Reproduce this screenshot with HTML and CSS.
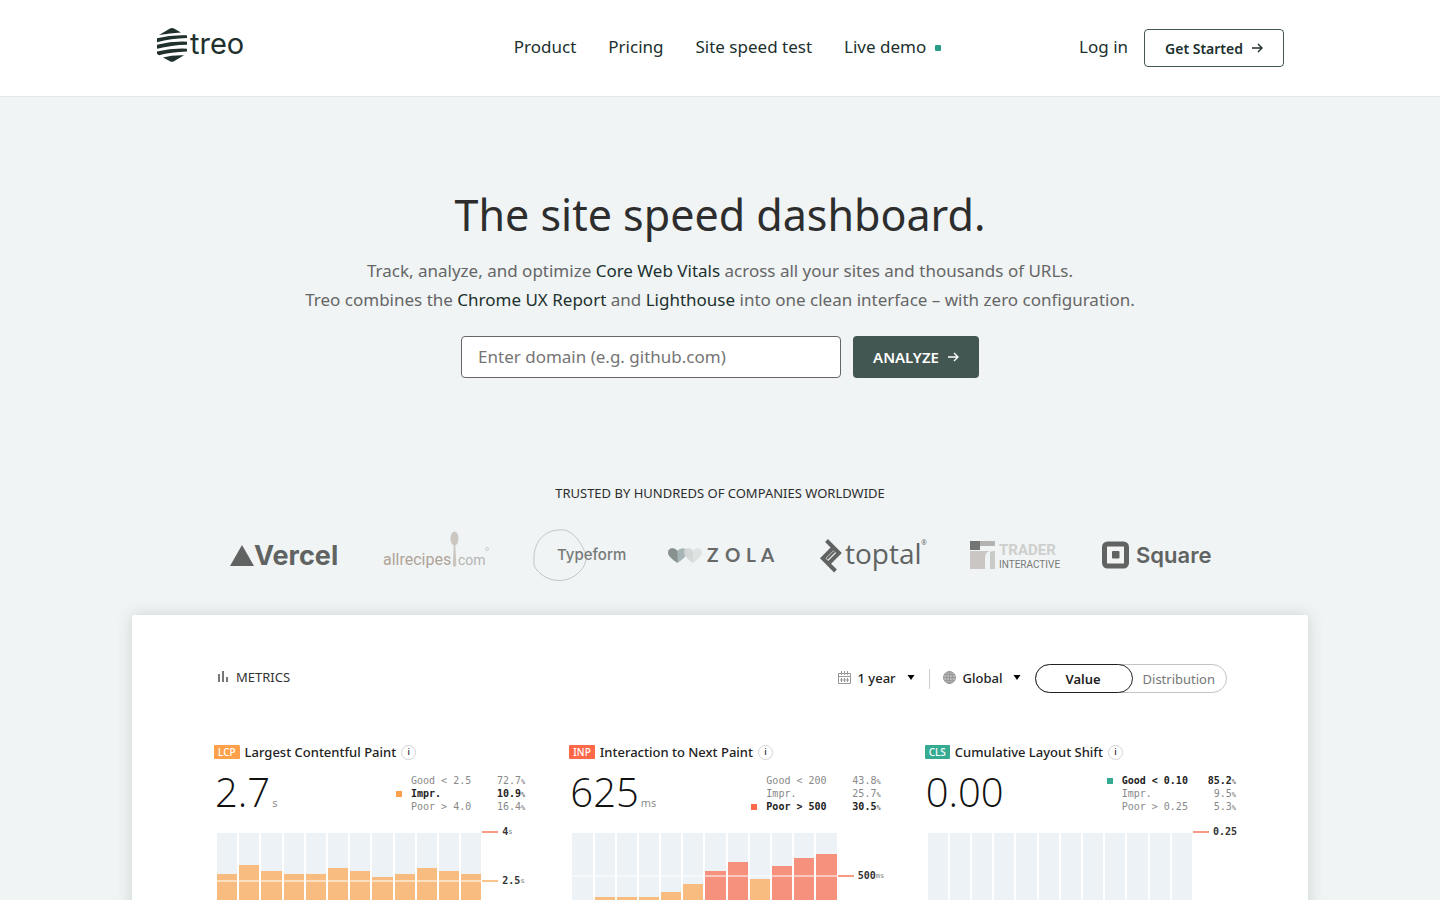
FILE: index.html
```html
<!DOCTYPE html>
<html lang="en">
<head>
    <meta charset="UTF-8">
    <meta name="viewport" content="width=device-width, initial-scale=1.0">
    <title>Treo</title>
    <link rel="stylesheet" href="styles.css">
</head>
<body>

    <!-- Header -->
    <header class="header">
        <div class="header-inner">
            <a class="logo" href="#" aria-label="treo">
                <svg width="92" height="36" viewBox="0 0 92 36">
                    <g fill="#20302d">
                        <path d="M3 8 L14 1.5 Q16 .4 18 1.5 L25 5.5 Q14 6 3 8Z"/>
                        <path d="M1 11.200 Q16 7.500 31 8.300 V11 Q15 11.500 1 15.200Z"/>
                        <path d="M1 17.800 Q16 14 31 14.700 V17.700 Q15 18 1 21.800Z"/>
                        <path d="M1 24.500 Q16 21 31 21.700 V24.500 Q15 25 3 28.200 L1 26.800Z"/>
                        <path d="M7 30.500 Q16 28 28 28.300 L18 34.200 Q16 35.200 14 34.200Z"/>
                    </g>
                    <text class="logo-text" x="34" y="27">treo</text>
                </svg>
            </a>
            <nav class="nav">
                <a href="#">Product</a>
                <a href="#">Pricing</a>
                <a href="#">Site speed test</a>
                <a class="live" href="#">Live demo</a>
            </nav>
            <div class="account">
                <a class="login" href="#">Log in</a>
                <a class="btn-outline" href="#">Get Started
                    <svg class="arrow" width="12" height="10" viewBox="0 0 12 10"><path d="M1 5h10M7 1l4 4-4 4"/></svg>
                </a>
            </div>
        </div>
    </header>

    <main class="hero">
        <h1>The site speed dashboard.</h1>
        <p class="lead">
            Track, analyze, and optimize <b>Core Web Vitals</b> across all your sites and thousands of URLs.<br>
            Treo combines the <b>Chrome UX Report</b> and <b>Lighthouse</b> into one clean interface – with zero configuration.
        </p>
        <form class="search">
            <input type="text" placeholder="Enter domain (e.g. github.com)" aria-label="Enter domain">
            <button type="button">ANALYZE
                <svg class="arrow" width="12" height="10" viewBox="0 0 12 10"><path d="M1 5h10M7 1l4 4-4 4"/></svg>
            </button>
        </form>

        <!-- Customers -->
        <h2 class="trusted">TRUSTED BY HUNDREDS OF COMPANIES WORLDWIDE</h2>
        <div class="brands">
            <svg width="110" height="56" viewBox="0 0 110 56" fill="#606362">
                <path d="M12 16 L24 37 H0Z"/>
                <text class="t-vercel" x="24" y="36">Vercel</text>
            </svg>
            <svg width="106" height="56" viewBox="0 0 106 56">
                <text class="t-recipes" x="0" y="36" fill="#b0a499">allrecipes</text>
                <ellipse cx="71.500" cy="9.500" rx="4" ry="7" fill="#cbc6bf"/>
                <path d="M70.800 16 h1.500 l1 20 q-1.800 4 -3.500 0Z" fill="#cbc6bf"/>
                <text class="t-com" x="75" y="36" fill="#b4b5b3">com</text>
                <circle cx="104" cy="20" r="1.500" fill="none" stroke="#b4b5b3" stroke-width=".6"/>
            </svg>
            <svg width="93" height="56" viewBox="-1 0 93 56">
                <path d="M1 29 C1 14 10 1.500 27 .8 C42 0 50 18 53 26 C55 38 41 51.500 27 51.500 C12 52 3 41 1.200 37 Q.8 33 1 29" fill="none" stroke="#c3c6c6"/>
                <text class="t-typeform" x="24" y="31" fill="#777a79">Typeform</text>
            </svg>
            <svg width="108" height="56" viewBox="0 0 108 56">
                <path d="M9.500 34 C4 30 0 27 0 23.500 C0 19 6 17.500 9.500 22 C13 17.500 19 19 19 23.500 C19 27 15 30 9.500 34Z" fill="#a6b5b5"/>
                <path d="M9.500 34 C4 30 0 27 0 23.500 C0 19 6 17.500 9.500 22Z" fill="#899190"/>
                <path d="M25 34 C20 30 16 27 16 23.500 C16 19 22 17.500 25 22 C28 17.500 34 19 34 23.500 C34 27 30 30 25 34Z" fill="#dadddc" opacity=".8"/>
                <path d="M25 34 C20 30 16 27 16 23.500 C16 19 22 17.500 25 22Z" fill="#d0d4d3" opacity=".7"/>
                <text class="t-zola" x="39 57 78 93" y="33" fill="#676a69">ZOLA</text>
            </svg>
            <svg width="107" height="56" viewBox="0 0 107 56">
                <g fill="none" stroke="#606362" stroke-width="4">
                    <path d="M6.500 11.500 L19 24 L8.500 34.500"/>
                    <path d="M15.500 42 L2.800 29.300 L13 19"/>
                </g>
                <path d="M7 30 L14.500 22.500" stroke="#606362" stroke-width="2"/>
                <text class="t-toptal" x="25" y="35" fill="#606362">toptal</text>
                <text class="t-reg" x="101" y="16" fill="#606362">®</text>
            </svg>
            <svg width="89" height="56" viewBox="0 0 89 56">
                <path d="M0 12h10v9H0Z" fill="#727574"/>
                <path d="M10 12h15v5H10Z" fill="#b3b4b2"/>
                <path d="M0 22h20q-5 1 -5 7v11H0Z" fill="#c9c6c4"/>
                <path d="M20 23 q1 -1 5 -1v18h-5Z" fill="#c9cbc9"/>
                <text class="t-trader" x="29" y="26" fill="#cecfcd">TRADER</text>
                <text class="t-inter" x="29" y="39" fill="#777a79">INTERACTIVE</text>
            </svg>
            <svg width="108" height="56" viewBox="0 0 108 56">
                <rect x="2.500" y="15" width="22" height="22" rx="3" fill="none" stroke="#606362" stroke-width="5"/>
                <rect x="10" y="22" width="7.500" height="7.500" rx="1" fill="#606362"/>
                <text class="t-square" x="34" y="34" fill="#606362">Square</text>
            </svg>
        </div>

        <!-- Dashboard preview -->
        <section class="card">
            <div class="toolbar">
                <h3>
                    <svg width="12" height="12" viewBox="0 0 12 12" fill="#777"><path d="M1 3h2v8H1ZM5 0h2v11H5ZM9 6h2v5H9Z"/></svg>
                    METRICS
                </h3>
                <div class="filters">
                    <label class="filter">
                        <svg width="13" height="13" viewBox="0 0 13 13" fill="none" stroke="#999"><path d="M.5 2.500h12v10H.5ZM.5 5.500h12M3.500 0v4M6.500 0v4M9.500 0v4M3.500 7v4M6.500 7v4M9.500 7v4M2 9h9"/></svg>
                        <select aria-label="Period"><option>1 year</option></select>
                        <svg class="caret" width="8" height="5" viewBox="0 0 8 5"><path d="M.5 0h7L4 5Z"/></svg>
                    </label>
                    <label class="filter filter-region">
                        <svg width="13" height="13" viewBox="0 0 13 13" stroke="#999"><circle cx="6.500" cy="6.500" r="6" fill="#bbb"/><path d="M.5 6.500h12M6.500 .5v12M1.500 3.500h10M1.500 9.500h10" fill="none"/><ellipse cx="6.500" cy="6.500" rx="3" ry="6" fill="none"/></svg>
                        <select aria-label="Region"><option>Global</option></select>
                        <svg class="caret" width="8" height="5" viewBox="0 0 8 5"><path d="M.5 0h7L4 5Z"/></svg>
                    </label>
                    <div class="toggle">
                        <button class="active" type="button">Value</button>
                        <button type="button">Distribution</button>
                    </div>
                </div>
            </div>

            <div class="metrics">
                <article class="metric orange">
                    <h4><span class="tag">LCP</span>Largest Contentful Paint<button class="info" type="button">i</button></h4>
                    <div class="summary">
                        <div class="number">2.7<small>s</small></div>
                        <table>
                            <tr><th>Good &lt; 2.5</th><td>72.7<small>%</small></td></tr>
                            <tr class="current"><th>Impr.</th><td>10.9<small>%</small></td></tr>
                            <tr><th>Poor &gt; 4.0</th><td>16.4<small>%</small></td></tr>
                        </table>
                    </div>
                    <div class="chart">
                        <div class="bars" data-values="88,97,91,88,88,94,91,85,88,94,91,88"></div>
                        <div class="mark poor mark-top">4<small>s</small></div>
                        <div class="mark mark-lcp">2.5<small>s</small></div>
                        <div class="line line-lcp"></div>
                    </div>
                </article>

                <article class="metric red">
                    <h4><span class="tag">INP</span>Interaction to Next Paint<button class="info" type="button">i</button></h4>
                    <div class="summary">
                        <div class="number">625<small>ms</small></div>
                        <table>
                            <tr><th>Good &lt; 200</th><td>43.8<small>%</small></td></tr>
                            <tr><th>Impr.</th><td>25.7<small>%</small></td></tr>
                            <tr class="current"><th>Poor &gt; 500</th><td>30.5<small>%</small></td></tr>
                        </table>
                    </div>
                    <div class="chart">
                        <div class="bars" data-limit="86" data-values="61,65,65,65,70,78,91,100,83,96,104,108"></div>
                        <div class="mark poor mark-inp">500<small>ms</small></div>
                        <div class="line line-inp"></div>
                    </div>
                </article>

                <article class="metric green">
                    <h4><span class="tag">CLS</span>Cumulative Layout Shift<button class="info" type="button">i</button></h4>
                    <div class="summary">
                        <div class="number">0.00</div>
                        <table>
                            <tr class="current"><th>Good &lt; 0.10</th><td>85.2<small>%</small></td></tr>
                            <tr><th>Impr.</th><td>9.5<small>%</small></td></tr>
                            <tr><th>Poor &gt; 0.25</th><td>5.3<small>%</small></td></tr>
                        </table>
                    </div>
                    <div class="chart">
                        <div class="bars" data-values="0,0,0,0,0,0,0,0,0,0,0,0"></div>
                        <div class="mark poor mark-top">0.25</div>
                    </div>
                </article>
            </div>
        </section>
    </main>

    <script>
        // one column per month, bars over the limit are red
        document.querySelectorAll(".bars").forEach(function (chart) {
            const limit = Number(chart.dataset.limit || 1000);
            chart.dataset.values.split(",").map(Number).forEach(function (value) {
                const column = document.createElement("div");
                const bar = document.createElement("div");
                column.className = "column";
                bar.className = value > limit ? "bar over" : "bar";
                bar.style.height = value + "px";
                column.appendChild(bar);
                chart.appendChild(column);
            });
        });
    </script>

</body>
</html>
```

FILE: styles.css
```css
* {
    margin: 0;
    padding: 0;
    box-sizing: border-box;
}

body {
    font-family: "Noto Sans", "Open Sans", sans-serif;
    font-size: 17px;
    color: #20302d;
    background: #f0f4f5;
}

a {
    color: inherit;
    text-decoration: none;
}

button, input, select {
    font: inherit;
    color: inherit;
}

svg {
    display: block;
    flex: none;
    overflow: visible;
}

/* Header */
.header {
    background: white;
    border-bottom: 1px solid #e2e7e8;
}

.header-inner {
    max-width: 1176px;
    height: 96px;
    margin: 0 auto;
    padding: 0 24px;
    display: grid;
    grid-template-columns: 1fr auto 1fr;
    align-items: center;
}

.logo {
    padding-bottom: 6px;
}

.logo-text {
    font-family: Inter, sans-serif;
    font-size: 29px;
    fill: #20302d;
}

.nav {
    display: flex;
    gap: 32px;
    line-height: 24px;
    padding-bottom: 2px;
}

.live {
    position: relative;
}

.live::after {
    content: "";
    position: absolute;
    right: -15px;
    top: 10px;
    width: 6px;
    height: 6px;
    border-radius: 1px;
    background: #2a9d8a;
}

.account {
    display: flex;
    justify-content: flex-end;
    align-items: center;
    gap: 16px;
}

.login {
    padding-bottom: 3px;
}

.btn-outline {
    display: flex;
    align-items: center;
    gap: 8px;
    height: 38px;
    padding: 0 20px;
    border: 1px solid #425652;
    border-radius: 4px;
    font-size: 14px;
    font-weight: 600;
}

.arrow {
    fill: none;
    stroke: currentColor;
    stroke-width: 1.4;
}

/* Hero */
.hero {
    text-align: center;
    padding-top: 88px;
}

h1 {
    font-size: 43px;
    font-weight: 400;
    line-height: 60px;
    color: #2d2d2d;
}

.lead {
    margin-top: 11px;
    line-height: 29px;
    color: #666;
}

.lead b {
    font-weight: 400;
    color: #20302d;
}

.search {
    display: flex;
    justify-content: center;
    gap: 12px;
    margin-top: 22px;
}

.search input {
    width: 380px;
    height: 42px;
    padding: 0 16px 2px;
    background: white;
    border: 1px solid #666;
    border-radius: 4px;
}

.search input::placeholder {
    color: #757575;
}

.search button {
    display: flex;
    align-items: center;
    gap: 8px;
    padding: 0 20px;
    border: none;
    border-radius: 4px;
    background: #425652;
    color: white;
    font-size: 15px;
    font-weight: 600;
}

/* Customers */
.trusted {
    margin-top: 105px;
    font-size: 13px;
    font-weight: 400;
    line-height: 20px;
    color: #2d2d2d;
}

.brands {
    display: flex;
    justify-content: space-between;
    max-width: 980px;
    margin: 26px auto 0;
}

.t-vercel {
    font: 700 27px Inter, sans-serif;
}

.t-recipes {
    font: 400 16px Roboto, sans-serif;
}

.t-com {
    font: 400 14px Roboto, sans-serif;
}

.t-typeform {
    font: 500 15px Inter, sans-serif;
}

.t-zola {
    font: 700 19px Lato, sans-serif;
}

.t-toptal {
    font: 400 28px "Open Sans", sans-serif;
}

.t-reg {
    font: 400 7px "Open Sans", sans-serif;
}

.t-trader {
    font: 700 15px Roboto, sans-serif;
}

.t-inter {
    font: 400 10px Roboto, sans-serif;
}

.t-square {
    font: 600 22px Inter, sans-serif;
}

/* Dashboard card */
.card {
    max-width: 1176px;
    margin: 30px auto 0;
    padding: 49px 72px 60px 82px;
    background: white;
    border-radius: 2px;
    box-shadow: 0 0 16px rgba(66, 86, 82, 0.2);
    text-align: left;
}

.toolbar {
    display: flex;
    justify-content: space-between;
    align-items: center;
    padding: 0 9px 0 3px;
    font-size: 13px;
}

.toolbar h3 {
    display: flex;
    align-items: center;
    gap: 7px;
    font-size: 13px;
    font-weight: 400;
    color: #333;
    padding-bottom: 3px;
}

.filters {
    display: flex;
    align-items: center;
}

.filter {
    display: flex;
    align-items: center;
    gap: 7px;
    padding-right: 14px;
    padding-bottom: 2px;
    color: #222;
    font-weight: 500;
}

.filter select {
    appearance: none;
    border: none;
    background: none;
    padding-right: 3px;
}

.filter-region {
    padding-left: 13px;
    border-left: 1px solid #ccc;
}

.caret {
    fill: black;
}

.toggle {
    display: flex;
    height: 29px;
    border: 1px solid #c4c4c4;
    border-radius: 15px;
}

.toggle button {
    padding: 0 11px 0 10px;
    border: none;
    background: none;
    color: #777;
}

.toggle .active {
    width: 98px;
    margin: -1px 0 -1px -1px;
    border: 1px solid #222;
    border-radius: 15px;
    color: #222;
    font-weight: 600;
}

/* Metrics */
.metrics {
    display: grid;
    grid-template-columns: repeat(3, 1fr);
    gap: 44px;
    margin-top: 50px;
}

.metric {
    --color: #ffa04a;
}

.metric.red {
    --color: #ff6849;
}

.metric.green {
    --color: #35ab94;
}

.metric h4 {
    display: flex;
    align-items: center;
    font-size: 13px;
    font-weight: 500;
    line-height: 18px;
    color: #222;
}

.tag {
    margin-right: 5px;
    padding: 0 4px;
    border-radius: 1px;
    background: var(--color);
    color: white;
    font-size: 10px;
    line-height: 14px;
}

.info {
    width: 15px;
    height: 15px;
    margin-left: 5px;
    border: 1px solid #d4d4d4;
    border-radius: 50%;
    background: white;
    font-size: 9px;
    line-height: 12px;
}

.summary {
    display: flex;
    justify-content: space-between;
    align-items: flex-start;
    margin-top: 8px;
}

.number {
    font-family: "Open Sans", sans-serif;
    font-size: 40px;
    font-weight: 300;
    line-height: 46px;
    color: #111;
    padding-left: 1px;
}

.number small {
    font-size: 11px;
    font-weight: 400;
    line-height: 0;
    color: #888;
    margin-left: 2px;
}

.metric table {
    margin-top: 5px;
    border-collapse: collapse;
    font-family: "DejaVu Sans Mono", monospace;
    font-size: 10px;
    line-height: 13px;
    color: #888;
}

.metric table th {
    position: relative;
    width: 86px;
    font-weight: 400;
    text-align: left;
}

.metric table td {
    text-align: right;
}

.metric table small, .mark small {
    font-size: 7px;
    line-height: 0;
    color: #777;
}

.metric .current, .metric .current th {
    color: #222;
    font-weight: 700;
}

.current th::before {
    content: "";
    position: absolute;
    left: -15px;
    top: 4px;
    width: 6px;
    height: 6px;
    background: var(--color);
}

/* Charts */
.chart {
    position: relative;
    margin-top: 18px;
    padding: 0 44px 0 3px;
}

.bars {
    display: flex;
    gap: 2px;
}

.column {
    flex: 1;
    display: flex;
    align-items: flex-end;
    height: 129px;
    background: #edf2f6;
}

.bar {
    flex: 1;
    background: #f9bc80;
}

.bar.over {
    background: #f5917c;
}

/* Threshold labels and lines over the bars */
.mark {
    position: absolute;
    left: calc(100% - 43px);
    display: flex;
    align-items: center;
    font-family: "DejaVu Sans Mono", monospace;
    font-size: 10px;
    font-weight: 700;
    line-height: 12px;
    color: #333;
}

.mark::before {
    content: "";
    width: 16px;
    height: 2px;
    margin-right: 4px;
    background: #fdc48b;
}

.mark.poor::before {
    background: #f99a85;
}

.mark small {
    font-weight: 400;
}

.mark-top {
    top: -7px;
}

.mark-lcp {
    top: 42px;
}

.mark-inp {
    top: 37px;
}

.line {
    position: absolute;
    left: 3px;
    right: 44px;
    height: 2px;
    background: rgba(255, 255, 255, 0.5);
}

.line-lcp {
    top: 47px;
}

.line-inp {
    top: 42px;
}
```
